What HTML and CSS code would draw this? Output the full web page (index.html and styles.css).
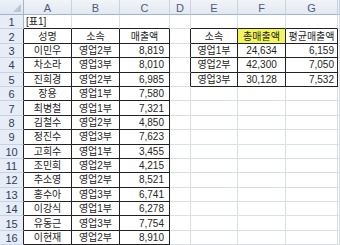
FILE: index.html
```html
<!DOCTYPE html>
<html lang="ko">
<head>
<meta charset="utf-8">
<title>Sheet</title>
<link rel="stylesheet" href="styles.css">
</head>
<body>
<div class="sheet">
  <div class="corner"><span class="tri"></span></div>
  <div class="ch">A</div><div class="ch">B</div><div class="ch">C</div><div class="ch">D</div><div class="ch">E</div><div class="ch">F</div><div class="ch">G</div><div class="ch"></div>

  <div class="rh">1</div><div class="c bb lt">[표1]</div><div class="c bb"></div><div class="c bb"></div><div class="c"></div><div class="c bb"></div><div class="c bb"></div><div class="c bb"></div><div class="c"></div>

  <div class="rh rhb">2</div><div class="t">성명</div><div class="t">소속</div><div class="t">매출액</div><div class="c br"></div><div class="t">소속</div><div class="t yel">총매출액</div><div class="t">평균매출액</div><div class="c"></div>

  <div class="rh rhb">3</div><div class="t">이민우</div><div class="t">영업2부</div><div class="t num">8,819</div><div class="c br"></div><div class="t">영업1부</div><div class="t">24,634</div><div class="t num g">6,159</div><div class="c"></div>

  <div class="rh rhb">4</div><div class="t">차소라</div><div class="t">영업3부</div><div class="t num">8,010</div><div class="c br"></div><div class="t">영업2부</div><div class="t">42,300</div><div class="t num g">7,050</div><div class="c"></div>

  <div class="rh rhb">5</div><div class="t">진희경</div><div class="t">영업2부</div><div class="t num">6,985</div><div class="c br"></div><div class="t">영업3부</div><div class="t">30,128</div><div class="t num g">7,532</div><div class="c"></div>

  <div class="rh rhb">6</div><div class="t">장용</div><div class="t">영업1부</div><div class="t num">7,580</div><div class="c"></div><div class="c"></div><div class="c"></div><div class="c"></div><div class="c"></div>

  <div class="rh rhb">7</div><div class="t">최병철</div><div class="t">영업1부</div><div class="t num">7,321</div><div class="c"></div><div class="c"></div><div class="c"></div><div class="c"></div><div class="c"></div>

  <div class="rh rhb">8</div><div class="t">김철수</div><div class="t">영업2부</div><div class="t num">4,850</div><div class="c"></div><div class="c"></div><div class="c"></div><div class="c"></div><div class="c"></div>

  <div class="rh rhb">9</div><div class="t">정진수</div><div class="t">영업3부</div><div class="t num">7,623</div><div class="c"></div><div class="c"></div><div class="c"></div><div class="c"></div><div class="c"></div>

  <div class="rh rhb">10</div><div class="t">고희수</div><div class="t">영업1부</div><div class="t num">3,455</div><div class="c"></div><div class="c"></div><div class="c"></div><div class="c"></div><div class="c"></div>

  <div class="rh rhb">11</div><div class="t">조민희</div><div class="t">영업2부</div><div class="t num">4,215</div><div class="c"></div><div class="c"></div><div class="c"></div><div class="c"></div><div class="c"></div>

  <div class="rh rhb">12</div><div class="t">추소영</div><div class="t">영업2부</div><div class="t num">8,521</div><div class="c"></div><div class="c"></div><div class="c"></div><div class="c"></div><div class="c"></div>

  <div class="rh rhb">13</div><div class="t">홍수아</div><div class="t">영업3부</div><div class="t num">6,741</div><div class="c"></div><div class="c"></div><div class="c"></div><div class="c"></div><div class="c"></div>

  <div class="rh rhb">14</div><div class="t">이강식</div><div class="t">영업1부</div><div class="t num">6,278</div><div class="c"></div><div class="c"></div><div class="c"></div><div class="c"></div><div class="c"></div>

  <div class="rh rhb">15</div><div class="t">유동근</div><div class="t">영업3부</div><div class="t num">7,754</div><div class="c"></div><div class="c"></div><div class="c"></div><div class="c"></div><div class="c"></div>

  <div class="rh rhb">16</div><div class="t">이현재</div><div class="t">영업2부</div><div class="t num">8,910</div><div class="c"></div><div class="c"></div><div class="c"></div><div class="c"></div><div class="c"></div>
</div>
</body>
</html>
```

FILE: styles.css
```css
html, body {
  margin: 0;
  padding: 0;
  background: #ffffff;
  overflow: hidden;
}

.sheet {
  display: grid;
  grid-template-columns: 24px 48px 48px 50px 21px 47px 48px 52px 1fr;
  grid-template-rows: 15px repeat(16, 14.4px);
  width: 340px;
  font-family: "Liberation Sans", "Noto Sans CJK KR", sans-serif;
  font-size: 10px;
  color: #262626;
}

.sheet > div {
  box-sizing: border-box;
  display: flex;
  align-items: center;
  justify-content: center;
  white-space: nowrap;
  line-height: 12px;
  padding-top: 1px;
}

.corner {
  position: relative;
  background: linear-gradient(#eef2f8, #dfe6f0);
  border-right: 1px solid #9eb6ce;
  border-bottom: 1px solid #9eb6ce;
}

.tri {
  position: absolute;
  right: 2px;
  bottom: 2px;
  width: 0;
  height: 0;
  border-left: 8px solid transparent;
  border-bottom: 8px solid #b8c6d8;
}

.ch {
  background: linear-gradient(#f1f4f9, #e2e8f1);
  border-right: 1px solid #c6d3e3;
  border-bottom: 1px solid #9eb6ce;
  color: #4a5d78;
  font-size: 11px;
}

.rh {
  background: #e6edf7;
  border-right: 1px solid #9eb6ce;
  border-bottom: 1px solid #c6d3e3;
  color: #2b3f5c;
  font-size: 11px;
}

.rhb {
  border-right-color: #222;
}

.c {
  border-right: 1px solid #dadfe6;
  border-bottom: 1px solid #dadfe6;
}

.t {
  border-right: 1px solid #222;
  border-bottom: 1px solid #222;
}

.bb {
  border-bottom-color: #222;
}

.br {
  border-right-color: #222;
}

.sheet > .lt {
  justify-content: flex-start;
  padding-left: 2px;
}

.sheet > .num {
  justify-content: flex-end;
  padding-right: 5px;
}

.sheet > .g {
  padding-right: 3px;
}

.yel {
  background: #f4f55c;
}
```
